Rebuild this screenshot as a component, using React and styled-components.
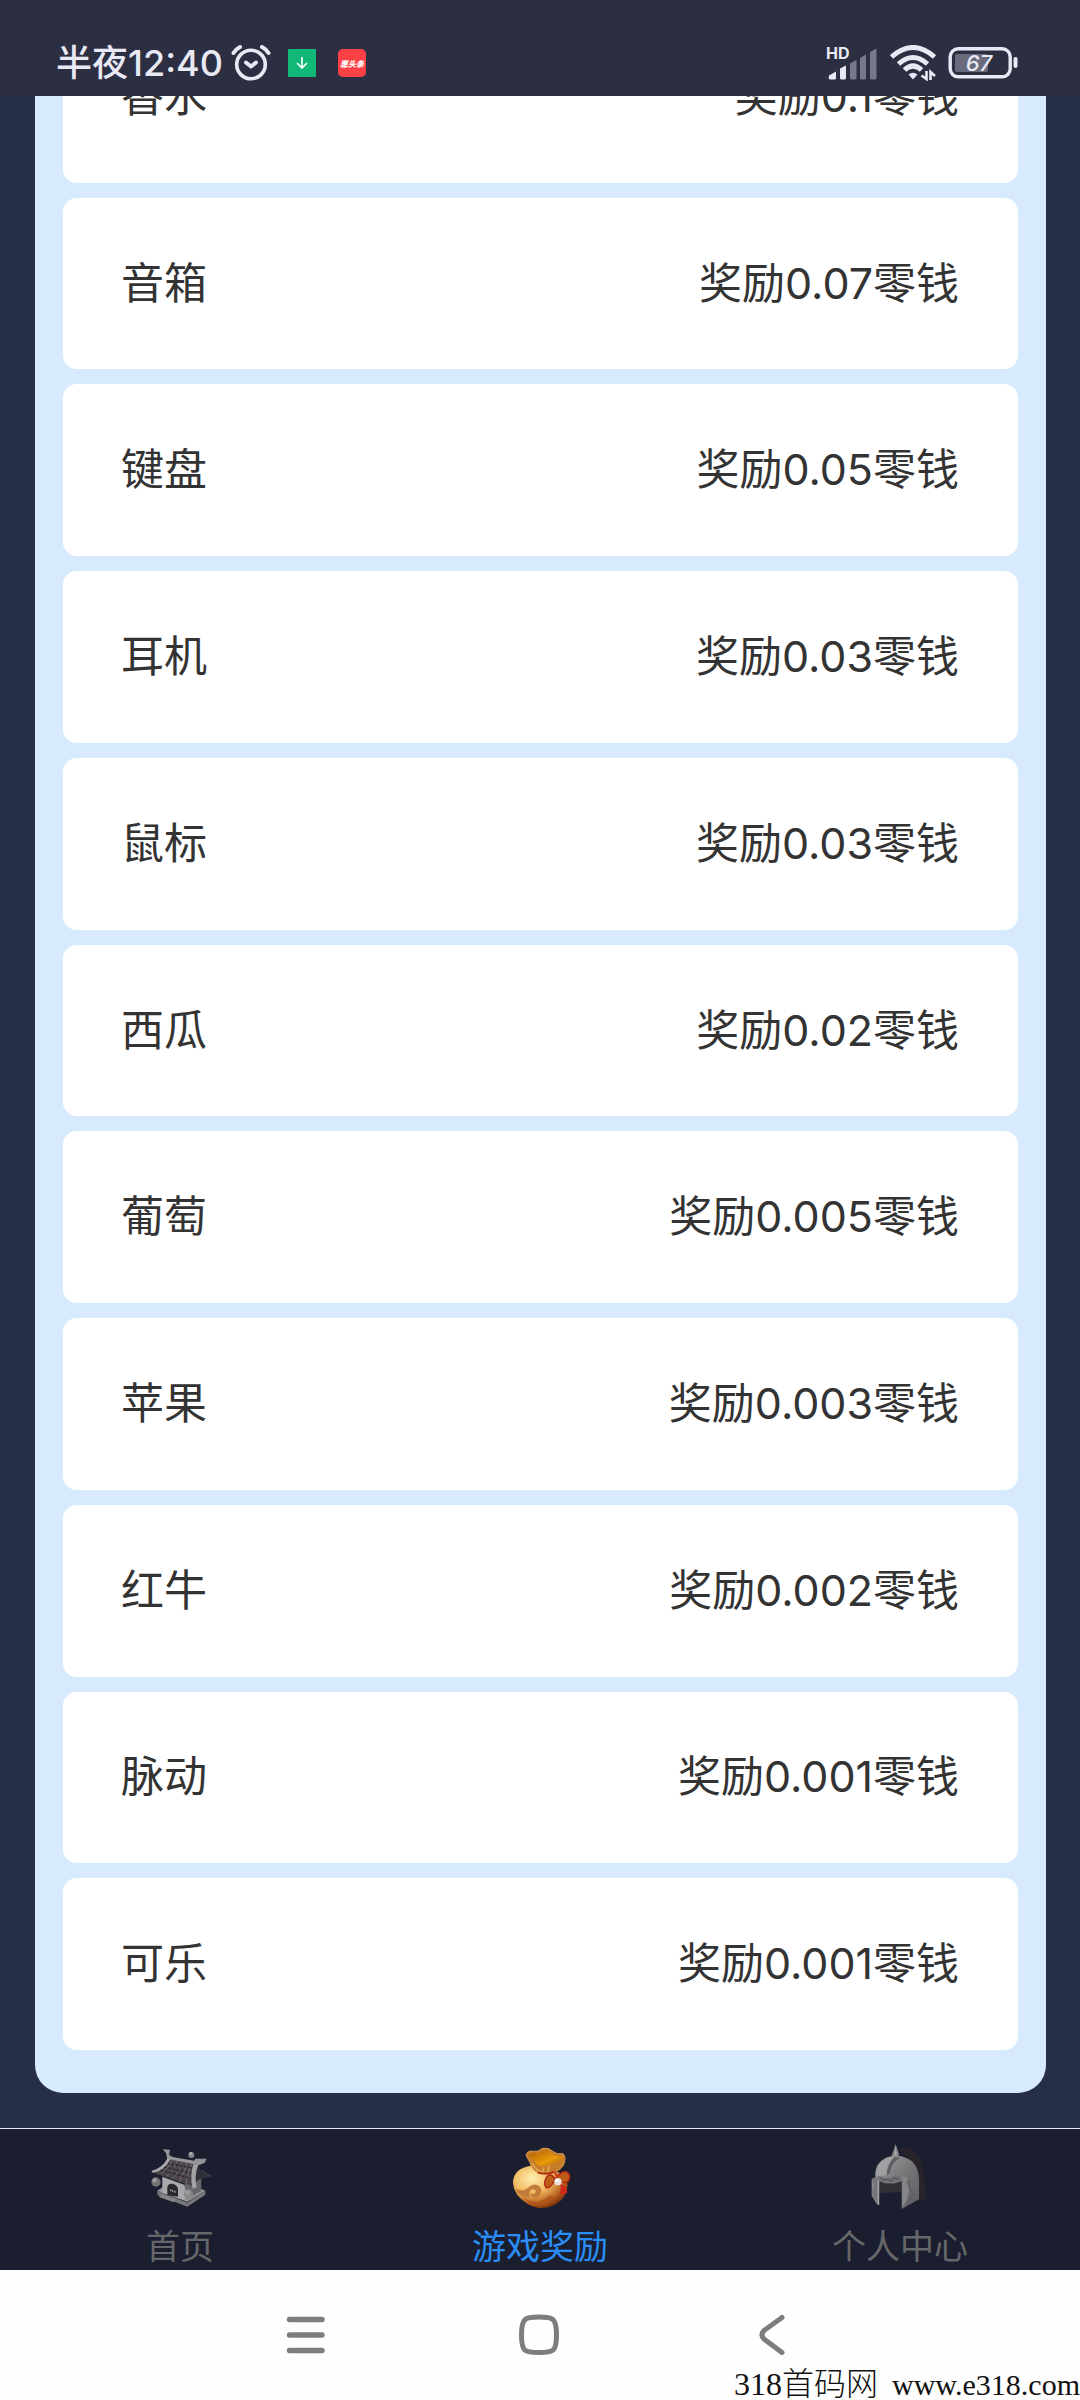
import React from "react";
import styled, { createGlobalStyle } from "styled-components";

const GlobalStyle = createGlobalStyle`
  * {
    box-sizing: border-box;
  }
  body {
    margin: 0;
    background: #262e48;
    color: #333;
    font-family: Inter, "Noto Sans CJK SC", sans-serif;
  }
  button {
    padding: 0;
    border: 0;
    background: none;
    font: inherit;
    color: inherit;
  }
  svg {
    display: block;
  }
`;

const Page = styled.div`
  position: relative;
  display: flex;
  flex-direction: column;
  min-height: 100vh;
`;

//status bar
const StatusBar = styled.header`
  position: relative;
  display: flex;
  justify-content: space-between;
  align-items: center;
  height: 96px;
  padding: 30px 62px 0 56px;
  background: #2c2e42;
  color: #e8e9f5;
`;

const StatusGroup = styled.div`
  display: flex;
  align-items: center;
  gap: ${(props) => props.$gap}px;
`;

const Badges = styled(StatusGroup)`
  margin-left: 17px;
`;

const Clock = styled.span`
  font-size: 36px;
  font-weight: 500;
  line-height: 40px;
`;

const AppBadge = styled.span`
  display: flex;
  align-items: center;
  justify-content: center;
  width: 28px;
  height: 28px;
  border-radius: ${(props) => props.$radius}px;
  background: ${(props) => props.$color};
  color: #fff;
  font-size: 8px;
  font-weight: 900;
  font-style: italic;
  white-space: nowrap;
`;

//reward list
const ScrollArea = styled.main`
  display: flex;
  flex-direction: column;
  flex: 1;
  overflow: hidden;
  padding: 0 34px 35px 35px;
`;

const RewardPanel = styled.ul`
  display: flex;
  flex-direction: column;
  flex: 1;
  gap: 15px;
  margin: -85px 0 0;
  padding: 0 28px 43px;
  border-radius: 28px;
  background: #d8ebfe;
  list-style: none;
`;

const RewardCard = styled.li`
  display: flex;
  flex: 1;
  justify-content: space-between;
  align-items: center;
  padding: 54px 59px 56px 58px;
  border-radius: 14px;
  background: #fff;
  font-size: 43px;
  line-height: 60px;
`;

//tabs
const TabBar = styled.nav`
  display: flex;
  border-top: 1px solid #e4e8f8;
  background: #1b1e2e;
`;

const Tab = styled.button`
  display: flex;
  flex: 1;
  flex-direction: column;
  align-items: center;
  gap: 15px;
  padding: 13px 0 1px;
  color: ${(props) => (props.$active ? "#2a8cf5" : "#66676b")};
  font-size: 34px;
  line-height: 44px;
`;

//system navigation
const SystemBar = styled.nav`
  display: flex;
  justify-content: center;
  align-items: center;
  gap: 153px;
  height: 130px;
  padding-right: 2px;
  background: #fefefe;
`;

const SystemButton = styled.button`
  display: flex;
  align-items: center;
  justify-content: center;
  width: 80px;
  height: 80px;
  color: #7d7d7d;
`;

const Watermark = styled.div`
  position: absolute;
  right: 0;
  bottom: 0;
  display: flex;
  align-items: baseline;
  gap: 14px;
  color: #111;
  font-family: "Liberation Serif", "Noto Sans CJK SC", serif;
  font-size: 32px;
  font-weight: 300;
  line-height: 30px;
`;

const SiteAddress = styled.span`
  font-size: 30px;
`;

const AlarmIcon = () => (
  <svg width="40" height="36" viewBox="0 0 40 36" fill="none" stroke="currentColor" strokeLinecap="round">
    <circle cx="20" cy="19.5" r="14.3" strokeWidth="3.6" />
    <path d="M2.5 8Q5 4 9 2M31 2Q35 4 37.500 8" strokeWidth="4" />
    <path d="M15 17.500L20 21.500L25 17.500" strokeWidth="4" strokeLinejoin="round" />
  </svg>
);

const DownloadIcon = () => (
  <svg width="12" height="14" viewBox="0 0 12 14" fill="none" stroke="#fff" strokeWidth="1.6">
    <path d="M6 1V12M1 7L6 12L11 7" />
  </svg>
);

const SignalIcon = () => (
  <svg width="52" height="34" viewBox="0 0 52 34" fill="currentColor">
    <text x="0" y="13" fontSize="16" fontWeight="700">
      HD
    </text>
    <path d="M3 29.500L10 25.500V32Q10 33.500 8.500 33.500H4Q2 33.500 3 29.500Z" />
    <path d="M14 22.500L20 19.500V32Q20 33.500 18.500 33.500H15.500Q14 33.500 14 32Z" />
    <g opacity="0.4">
      <path d="M24 17.500L30.500 14V32Q30.500 33.500 29 33.500H25.500Q24 33.500 24 32Z" />
      <path d="M34 12L40 8.500V32Q40 33.500 38.500 33.500H35.500Q34 33.500 34 32Z" />
      <path d="M44 6L50.500 2.500V32Q50.500 33.500 49 33.500H45.500Q44 33.500 44 32Z" />
    </g>
  </svg>
);

const WifiIcon = () => (
  <svg width="46" height="36" viewBox="0 0 46 36" fill="none" stroke="currentColor">
    <path d="M1.500 12Q23 -7 44.500 12" strokeWidth="5" />
    <path d="M8.500 19Q23 6 37.500 19" strokeWidth="5" />
    <path d="M14.500 25Q23 17 31.500 25" strokeWidth="5" />
    <path d="M18.500 29.500Q23 26 27.500 29.500L23 34.500Z" fill="currentColor" stroke="none" />
    <path d="M36.500 26V34L31.500 30.500M40.500 35V27L45 31" strokeWidth="2.600" />
  </svg>
);

const BatteryIcon = () => (
  <svg width="70" height="32" viewBox="0 0 70 32">
    <rect x="2.200" y="1.800" width="60" height="28" rx="8" fill="none" stroke="currentColor" strokeWidth="3.400" />
    <rect x="7" y="7" width="33" height="18" rx="2" fill="#696b7d" />
    <rect x="65.500" y="10" width="4" height="11" rx="2" fill="currentColor" />
    <text x="31" y="24" textAnchor="middle" fontSize="22" fontWeight="500" fontStyle="italic" fill="currentColor">
      67
    </text>
  </svg>
);

const HouseIcon = () => (
  <svg width="64" height="68" viewBox="444 426 192 204">
    <path d="M472 572L562 608L616 572V584L562 620L472 585Z" fill="#77777a" />
    <path d="M472 572L562 606L616 572L590 560H490Z" fill="#929295" />
    <path d="M487 530L554 555V600L487 578Z" fill="#a9a9ab" />
    <path d="M554 552L604 535V572L562 598Z" fill="#66666a" />
    <path d="M502 586V562Q504 549 519 552Q534 556 534 570V590Z" fill="#29262d" />
    <path d="M512 574V568M518 576V570M525 578V572" stroke="#99999c" strokeWidth="4" />
    <path d="M594 488L602 512L634 530L600 538L584 548Z" fill="#302f38" />
    <path d="M604 510Q617 524 634 529" fill="none" stroke="#3e3e46" strokeWidth="4" />
    <path d="M504 474L586 490Q573 520 576 558L462 519Q492 502 504 474Z" fill="#4b454b" />
    <path
      d="M515 482Q506 507 482 520M530 485Q523 514 499 528M546 488Q538 518 518 536M561 490Q552 520 538 544M574 492Q562 526 558 552"
      fill="none"
      stroke="#746d72"
      strokeWidth="3"
    />
    <path
      d="M501 489L580 505M492 501L575 520M482 511L573 535"
      fill="none"
      stroke="#28262e"
      strokeWidth="4"
      strokeDasharray="8 5"
    />
    <path d="M488 448L510 449L507 464L518 471L582 482L586 476L620 476L614 488L598 495L580 492L502 477L498 459Z" fill="#96969a" />
    <path d="M503 474Q488 504 454 513L459 519Q495 511 511 477Z" fill="#aaaaae" />
    <path d="M581 491Q568 523 578 566L590 562Q582 526 595 494Z" fill="#a3a3a6" />
    <circle cx="574" cy="465" r="9" fill="#88888c" />
    <circle cx="572" cy="460" r="4" fill="#b5b5b8" />
    <circle cx="468" cy="546" r="14" fill="#707073" />
    <circle cx="464" cy="541" r="7" fill="#98989b" />
    <circle cx="565" cy="582" r="14" fill="#88888b" />
    <circle cx="562" cy="577" r="7" fill="#9c9c9f" />
    <path d="M485 584L528 597L522 607L476 591Z" fill="#858588" />
  </svg>
);

const MoneyBagIcon = () => (
  <svg width="64" height="68" viewBox="324 96 192 204">
    <defs>
      <radialGradient id="bag" cx="0.35" cy="0.3" r="0.75">
        <stop offset="0" stopColor="#fff0b0" />
        <stop offset="0.45" stopColor="#f0bb62" />
        <stop offset="0.8" stopColor="#b95f1c" />
        <stop offset="1" stopColor="#742c08" />
      </radialGradient>
      <linearGradient id="bagMouth" x1="0" y1="0" x2="1" y2="1">
        <stop offset="0" stopColor="#a95b08" />
        <stop offset="0.6" stopColor="#e99a08" />
        <stop offset="1" stopColor="#ad5f12" />
      </linearGradient>
    </defs>
    <path d="M392 167Q339 176 339 219Q342 258 382 281Q429 308 472 280Q502 260 503 224Q500 194 462 181Z" fill="url(#bag)" />
    <path d="M346 236Q368 248 386 232Q396 221 410 224Q426 230 424 246Q420 262 403 263Q393 260 391 250Q405 255 408 245Q405 234 394 239Q384 247 390 262Q362 264 346 236Z" fill="#c47a3a" />
    <path d="M368 262Q407 288 438 263Q450 251 469 263Q446 290 409 287Q385 281 368 262Z" fill="#a9511d" opacity="0.7" />
    <path
      d="M378 136Q383 120 399 124Q415 127 427 115Q445 111 458 124Q471 135 489 131Q500 142 491 164Q483 180 462 187Q438 198 411 187Q397 179 390 158Z"
      fill="#c87d29"
      stroke="#d79a54"
      strokeWidth="3"
    />
    <path d="M384 137Q398 124 414 130Q432 117 447 122Q457 139 490 141Q486 155 464 158Q446 164 436 168Q415 173 404 156Z" fill="url(#bagMouth)" />
    <path d="M397 159Q407 182 428 187L432 171M447 166L444 187" stroke="#e9b05e" strokeWidth="4" fill="none" />
    <path d="M414 188Q440 196 462 185" stroke="#a82612" strokeWidth="5" fill="none" />
    <path d="M465 206Q448 184 438 204Q430 221 438 233Q450 238 465 208Q489 176 504 188Q515 199 504 215Q488 221 469 210Z" fill="#bc5e18" stroke="#b32414" strokeWidth="4" />
    <path d="M469 209L490 234M464 184L474 209" stroke="#c9331d" strokeWidth="5" />
    <path d="M484 226Q499 226 502 247Q491 258 480 251Z" fill="#cf291d" />
    <circle cx="474" cy="215" r="11" fill="#eadfdc" />
    <circle cx="471" cy="211" r="5" fill="#fff" />
  </svg>
);

const HelmetIcon = () => (
  <svg width="64" height="68" viewBox="264 96 192 204">
    <defs>
      <linearGradient id="steel" x1="0" y1="0" x2="1" y2="1">
        <stop offset="0" stopColor="#a2a2a4" />
        <stop offset="0.5" stopColor="#77777a" />
        <stop offset="1" stopColor="#5c5c60" />
      </linearGradient>
    </defs>
    <path d="M358 120Q376 105 397 122Q431 147 432 207Q434 248 442 271H414L400 160Z" fill="#29242c" />
    <path d="M297 212H365V247L298 249Z" fill="#303037" />
    <path d="M347 102L357 133Q360 140 334 140L339 125Z" fill="#858588" />
    <path d="M347 106L350 137H344Z" fill="#adadaf" />
    <path
      d="M286 202Q282 157 324 141Q364 129 396 154Q417 174 417 212V268L365 297V210L298 213V286L289 281L275 257V208Z"
      fill="url(#steel)"
    />
    <path d="M324 142Q289 157 288 199L318 195Q320 163 343 141Z" fill="#a0a0a2" />
    <path d="M343 141Q319 164 321 196L330 190Q332 160 360 143Z" fill="#5e5e63" />
    <path d="M294 197L319 204L347 193L365 198V212L342 219L317 219L294 211Z" fill="#707074" stroke="#8c8c8f" strokeWidth="2" />
    <path d="M302 203L311 211L322 207L331 213L344 204L355 208" fill="none" stroke="#4c4c52" strokeWidth="3" />
    <path d="M276 206L293 202L292 280L281 261L277 241L284 231Z" fill="#77777a" />
    <path d="M295 212V285" stroke="#a4a4a6" strokeWidth="4" />
    <path d="M367 198L382 203L378 220L388 239L380 274L366 293Z" fill="#858588" />
    <path d="M388 210Q386 240 399 252Q391 270 379 278" fill="none" stroke="#55555a" strokeWidth="3" />
  </svg>
);

const MenuIcon = () => (
  <svg width="40" height="40" viewBox="0 0 40 40" stroke="currentColor" strokeWidth="5.4" strokeLinecap="round">
    <path d="M3.500 4.500H36M3.500 20H36M3.500 35.500H36" />
  </svg>
);

const HomeIcon = () => (
  <svg width="42" height="42" viewBox="0 0 42 42" fill="none" stroke="currentColor" strokeWidth="5">
    <path d="M21 3C35 3 38.500 4 38.500 21S35 38.500 21 38.500S3.500 38 3.500 21S7 3 21 3Z" />
  </svg>
);

const BackIcon = () => (
  <svg width="26" height="42" viewBox="0 0 26 42" fill="none" stroke="currentColor" strokeWidth="5" strokeLinecap="round">
    <path d="M23 3.500L5 16.500Q1 21 5 25L23 38.500" />
  </svg>
);

const rewards = [
  { name: "香水", amount: "0.1" },
  { name: "音箱", amount: "0.07" },
  { name: "键盘", amount: "0.05" },
  { name: "耳机", amount: "0.03" },
  { name: "鼠标", amount: "0.03" },
  { name: "西瓜", amount: "0.02" },
  { name: "葡萄", amount: "0.005" },
  { name: "苹果", amount: "0.003" },
  { name: "红牛", amount: "0.002" },
  { name: "脉动", amount: "0.001" },
  { name: "可乐", amount: "0.001" },
];

const tabs = [
  { label: "首页", icon: HouseIcon },
  { label: "游戏奖励", icon: MoneyBagIcon, active: true },
  { label: "个人中心", icon: HelmetIcon },
];

function App() {
  const renderReward = (reward) => (
    <RewardCard key={reward.name}>
      <span>{reward.name}</span>
      <span>奖励{reward.amount}零钱</span>
    </RewardCard>
  );

  const renderTab = ({ label, icon: Icon, active }) => (
    <Tab key={label} type="button" $active={active} aria-current={active ? "page" : undefined}>
      <Icon />
      <span>{label}</span>
    </Tab>
  );

  return (
    <>
      <GlobalStyle />
      <Page>
        <StatusBar>
          <StatusGroup $gap={0}>
            <StatusGroup $gap={8}>
              <Clock>半夜12:40</Clock>
              <AlarmIcon />
            </StatusGroup>
            <Badges $gap={22}>
              <AppBadge $color="#12b877" $radius={1}>
                <DownloadIcon />
              </AppBadge>
              <AppBadge $color="#fb4046" $radius={5}>
                惠头条
              </AppBadge>
            </Badges>
          </StatusGroup>
          <StatusGroup $gap={12}>
            <SignalIcon />
            <WifiIcon />
            <BatteryIcon />
          </StatusGroup>
        </StatusBar>
        <ScrollArea>
          <RewardPanel>{rewards.map(renderReward)}</RewardPanel>
        </ScrollArea>
        <TabBar>{tabs.map(renderTab)}</TabBar>
        <SystemBar>
          <SystemButton type="button" aria-label="菜单">
            <MenuIcon />
          </SystemButton>
          <SystemButton type="button" aria-label="主屏幕">
            <HomeIcon />
          </SystemButton>
          <SystemButton type="button" aria-label="返回">
            <BackIcon />
          </SystemButton>
        </SystemBar>
        <Watermark>
          <span>318首码网</span>
          <SiteAddress>www.e318.com</SiteAddress>
        </Watermark>
      </Page>
    </>
  );
}

export default App;
